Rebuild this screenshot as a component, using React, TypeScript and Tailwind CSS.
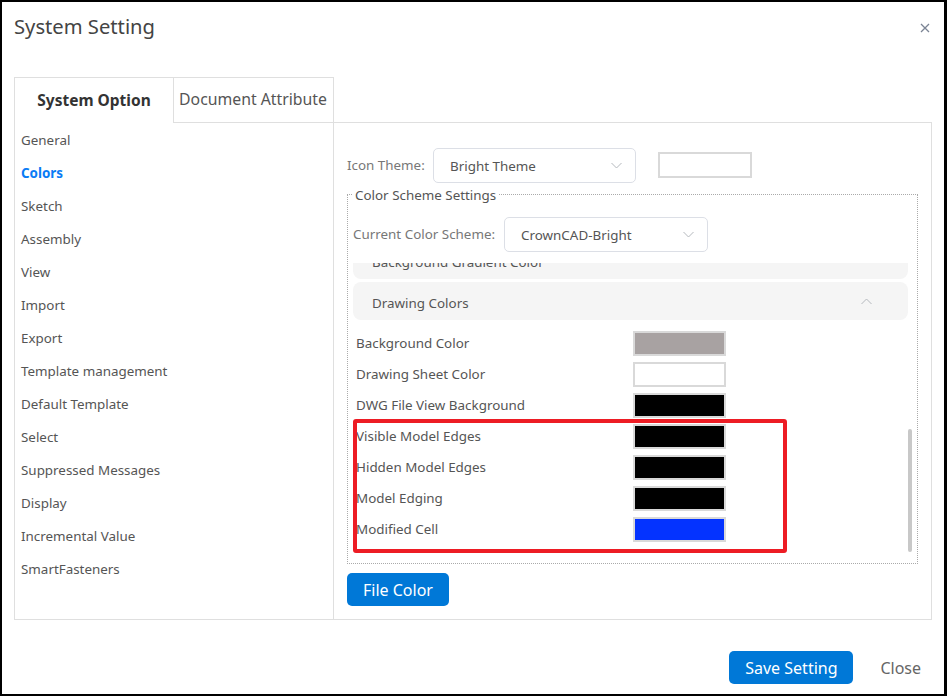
import React from "react";

const menu = ["General","Colors","Sketch","Assembly","View","Import","Export","Template management","Default Template","Select","Suppressed Messages","Display","Incremental Value","SmartFasteners"];
const rows: [string, string][] = [
  ["Background Color", "#a8a2a2"],
  ["Drawing Sheet Color", "#ffffff"],
  ["DWG File View Background", "#000000"],
  ["Visible Model Edges", "#000000"],
  ["Hidden Model Edges", "#000000"],
  ["Model Edging", "#000000"],
  ["Modified Cell", "#0433ff"],
];

function Chevron({ up = false }: { up?: boolean }) {
  return (
    <svg width="11" height="7" viewBox="0 0 11 7" fill="none" stroke="#b4b8bd" strokeWidth="1">
      <path d={up ? "M0.5 6L5.5 1L10.5 6" : "M0.5 1L5.5 6L10.5 1"} />
    </svg>
  );
}

function Select({ text, w }: { text: string; w: string }) {
  return (
    <div className={`${w} h-[35px] shrink-0 flex items-center justify-between pl-[16px] pr-[13px] border border-[#dcdfe6] rounded-[5px] text-[13.4px] text-[#555] bg-white`}>
      <span className="translate-y-[1px]">{text}</span>
      <Chevron />
    </div>
  );
}

export default function App() {
  return (
    <div className="w-[947px] h-[696px] border-black border-t-2 border-l-2 border-r-[3px] border-b-2 bg-white flex flex-col relative overflow-hidden font-['Noto_Sans','Open_Sans',sans-serif] text-[#555]">
      <div className="flex justify-between pl-[12px] pr-[14px] pt-[10px] h-[75px] items-start">
        <div className="text-[20.2px] leading-[28px] text-[#444]">System Setting</div>
        <svg width="10" height="10" viewBox="0 0 10 10" stroke="#7b8494" strokeWidth="1.3" className="mt-[11px]"><path d="M1 1L9 9M9 1L1 9" /></svg>
      </div>

      <div className="mx-[12px] w-[918px] flex flex-col h-[543px]">
        <div className="flex h-[46px] shrink-0">
          <div className="w-[160px] border border-b-0 border-[#dfdfdf] flex items-center justify-center text-[15.5px] font-bold text-[#333]">System Option</div>
          <div className="w-[161px] border-t border-r border-b border-[#dfdfdf] -ml-px flex items-center justify-center text-[15.8px] text-[#555]">Document Attribute</div>
          <div className="flex-1 border-b border-[#dfdfdf]" />
        </div>
        <div className="flex flex-1 border-l border-r border-b border-[#dfdfdf] -mt-px">
          <div className="w-[319px] shrink-0 border-r border-[#dfdfdf] pt-[2px] pl-[6px]">
            {menu.map((m) => (
              <div key={m} className={`h-[33px] flex items-center text-[13.4px] ${m === "Colors" ? "font-bold text-[#0a7cf5]" : "text-[#555]"}`}>{m}</div>
            ))}
          </div>
          <div className="flex-1 pl-[13px] pt-[26px] min-w-0">
            <div className="flex items-start h-[35px]">
              <span className="w-[86px] h-[35px] flex items-center text-[13.4px] text-[#777]">Icon Theme:</span>
              <Select text="Bright Theme" w="w-[203px]" />
              <div className="ml-[22px] mt-[4px] w-[94px] h-[26px] border-2 border-[#d9d9d9]" />
            </div>
            <div className="relative mt-[11px] w-[571px] h-[370px] border border-dotted border-[#aaa] pl-[5px]">
              <div className="absolute -top-[10px] left-[4px] bg-white px-[3px] text-[13.4px] leading-[20px] text-[#555]">Color Scheme Settings</div>
              <div className="flex items-center mt-[22px] h-[35px]">
                <span className="w-[151px] text-[13.4px] text-[#777]">Current Color Scheme:</span>
                <Select text="CrownCAD-Bright" w="w-[204px]" />
              </div>
              <div className="relative mt-[11px] h-[291px] overflow-hidden">
                <div className="-mt-[22px] w-[555px]">
                  <div className="h-[38px] bg-[#f5f5f5] rounded-[8px] pl-[19px] flex items-center text-[13.4px]">
                    <span className="translate-y-[2px]">Background Gradient Color</span>
                  </div>
                  <div className="mt-[3px] h-[38px] bg-[#f5f5f5] rounded-[8px] pl-[19px] pr-[36px] flex items-center justify-between text-[13.4px]">
                    <span className="translate-y-[2px]">Drawing Colors</span>
                    <Chevron up />
                  </div>
                  <div className="mt-[11px] flex flex-col gap-[6px]">
                    {rows.map(([label, c]) => (
                      <div key={label} className="flex items-center justify-between h-[25px] pl-[3px] text-[13.4px] w-[373px]">
                        <span>{label}</span>
                        <div className="w-[93px] h-[25px] border-2 border-[#d9d9d9]" style={{ backgroundColor: c }} />
                      </div>
                    ))}
                  </div>
                </div>
                <div className="absolute right-[5px] top-[166px] w-[4px] h-[123px] rounded-full bg-[#c8c8c8]" />
              </div>
            </div>
            <button className="mt-[9px] w-[102px] h-[33px] rounded-[5px] bg-[#0078d7] text-white text-[16px]">File Color</button>
          </div>
        </div>
      </div>

      <div className="flex-1 flex items-start justify-end pt-[31px] pr-[23px]">
        <button className="w-[124px] h-[33px] rounded-[5px] bg-[#0078d7] text-white text-[16px]">Save Setting</button>
        <span className="ml-[27px] h-[33px] flex items-center text-[16px] text-[#666]">Close</span>
      </div>

      <div className="absolute left-[351px] top-[417px] w-[434px] h-[134px] border-4 border-[#ed1c24] rounded-[3px]" />
    </div>
  );
}
